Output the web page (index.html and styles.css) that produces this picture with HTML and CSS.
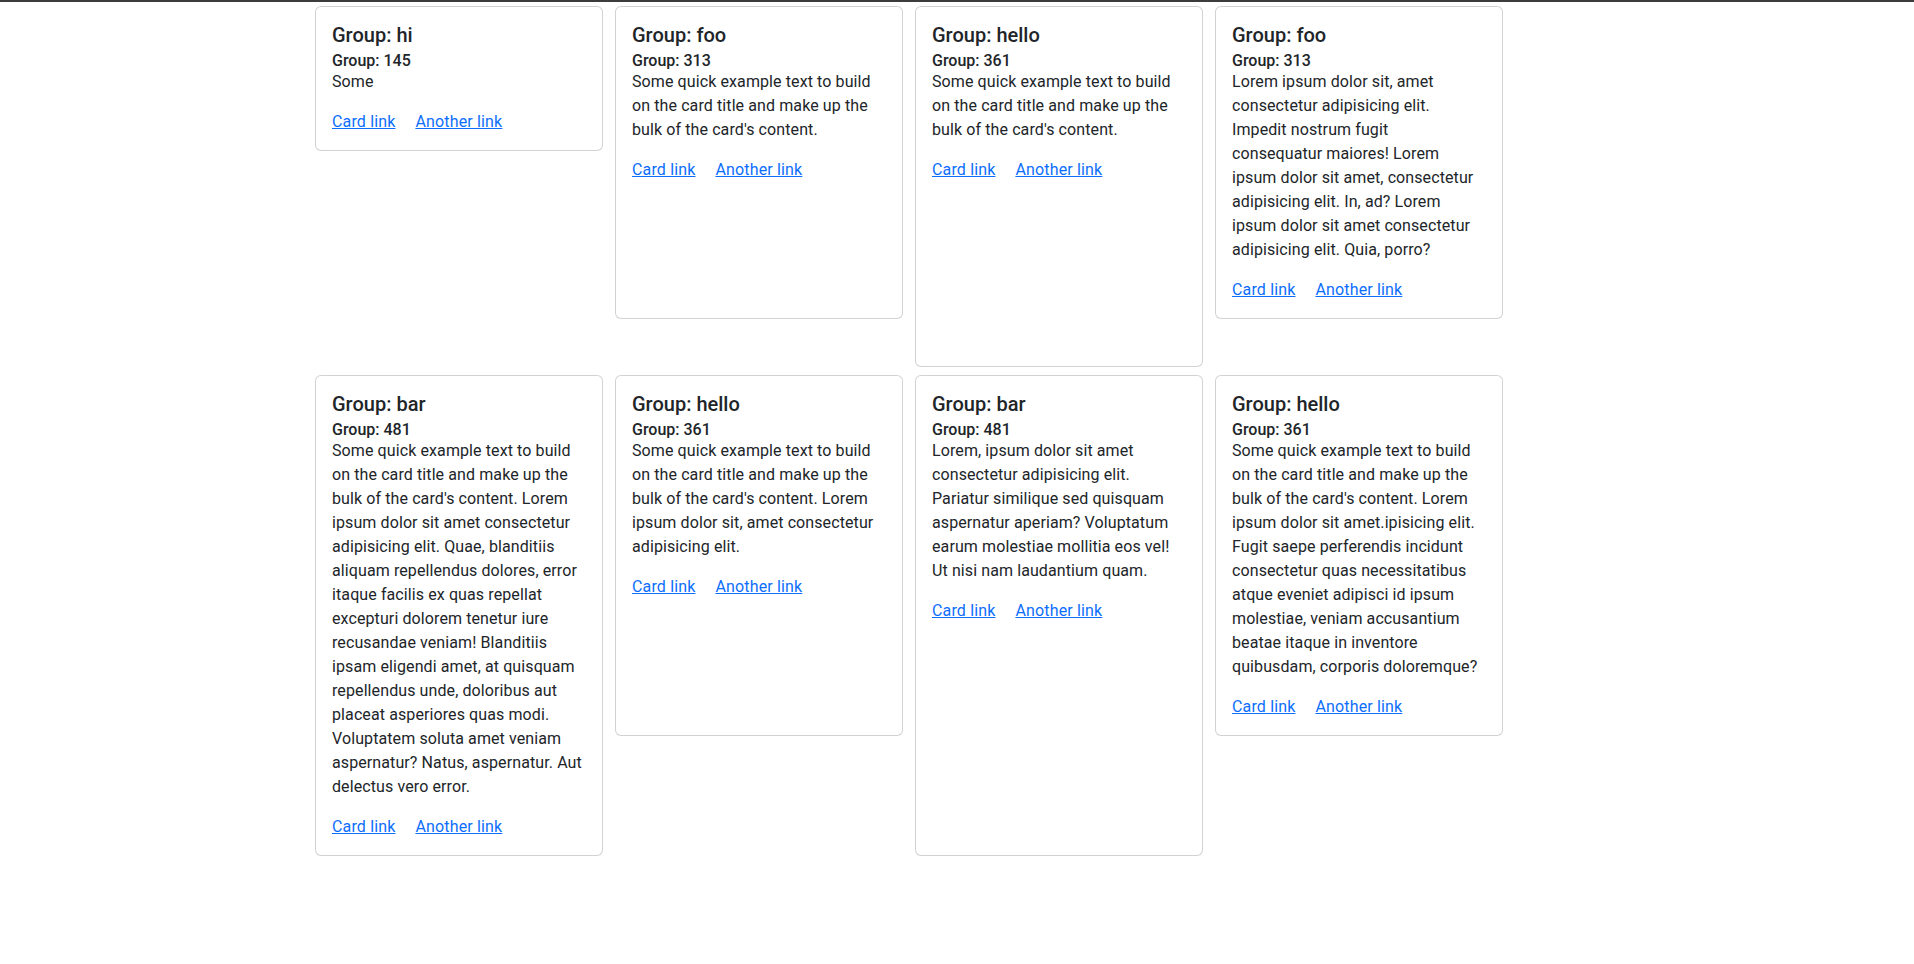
FILE: index.html
```html
<!DOCTYPE html>
<html lang="en">
<head>
<meta charset="utf-8">
<title>Cards</title>
<link rel="stylesheet" href="styles.css">
</head>
<body>
<div class="topbar"></div>
<main class="container">
  <div class="card-grid">
    <div class="card" style="height:145px">
      <div class="card-body">
        <h5 class="card-title">Group: hi</h5>
        <h6 class="card-subtitle">Group: 145</h6>
        <p class="card-text">Some</p>
        <a href="#" class="card-link">Card link</a>
        <a href="#" class="card-link">Another link</a>
      </div>
    </div>
    <div class="card" style="height:313px">
      <div class="card-body">
        <h5 class="card-title">Group: foo</h5>
        <h6 class="card-subtitle">Group: 313</h6>
        <p class="card-text">Some quick example text to build<br>on the card title and make up the<br>bulk of the card's content.</p>
        <a href="#" class="card-link">Card link</a>
        <a href="#" class="card-link">Another link</a>
      </div>
    </div>
    <div class="card" style="height:361px">
      <div class="card-body">
        <h5 class="card-title">Group: hello</h5>
        <h6 class="card-subtitle">Group: 361</h6>
        <p class="card-text">Some quick example text to build<br>on the card title and make up the<br>bulk of the card's content.</p>
        <a href="#" class="card-link">Card link</a>
        <a href="#" class="card-link">Another link</a>
      </div>
    </div>
    <div class="card" style="height:313px">
      <div class="card-body">
        <h5 class="card-title">Group: foo</h5>
        <h6 class="card-subtitle">Group: 313</h6>
        <p class="card-text">Lorem ipsum dolor sit, amet<br>consectetur adipisicing elit.<br>Impedit nostrum fugit<br>consequatur maiores! Lorem<br>ipsum dolor sit amet, consectetur<br>adipisicing elit. In, ad? Lorem<br>ipsum dolor sit amet consectetur<br>adipisicing elit. Quia, porro?</p>
        <a href="#" class="card-link">Card link</a>
        <a href="#" class="card-link">Another link</a>
      </div>
    </div>
    <div class="card" style="height:481px">
      <div class="card-body">
        <h5 class="card-title">Group: bar</h5>
        <h6 class="card-subtitle">Group: 481</h6>
        <p class="card-text">Some quick example text to build<br>on the card title and make up the<br>bulk of the card's content. Lorem<br>ipsum dolor sit amet consectetur<br>adipisicing elit. Quae, blanditiis<br>aliquam repellendus dolores, error<br>itaque facilis ex quas repellat<br>excepturi dolorem tenetur iure<br>recusandae veniam! Blanditiis<br>ipsam eligendi amet, at quisquam<br>repellendus unde, doloribus aut<br>placeat asperiores quas modi.<br>Voluptatem soluta amet veniam<br>aspernatur? Natus, aspernatur. Aut<br>delectus vero error.</p>
        <a href="#" class="card-link">Card link</a>
        <a href="#" class="card-link">Another link</a>
      </div>
    </div>
    <div class="card" style="height:361px">
      <div class="card-body">
        <h5 class="card-title">Group: hello</h5>
        <h6 class="card-subtitle">Group: 361</h6>
        <p class="card-text">Some quick example text to build<br>on the card title and make up the<br>bulk of the card's content. Lorem<br>ipsum dolor sit, amet consectetur<br>adipisicing elit.</p>
        <a href="#" class="card-link">Card link</a>
        <a href="#" class="card-link">Another link</a>
      </div>
    </div>
    <div class="card" style="height:481px">
      <div class="card-body">
        <h5 class="card-title">Group: bar</h5>
        <h6 class="card-subtitle">Group: 481</h6>
        <p class="card-text">Lorem, ipsum dolor sit amet<br>consectetur adipisicing elit.<br>Pariatur similique sed quisquam<br>aspernatur aperiam? Voluptatum<br>earum molestiae mollitia eos vel!<br>Ut nisi nam laudantium quam.</p>
        <a href="#" class="card-link">Card link</a>
        <a href="#" class="card-link">Another link</a>
      </div>
    </div>
    <div class="card" style="height:361px">
      <div class="card-body">
        <h5 class="card-title">Group: hello</h5>
        <h6 class="card-subtitle">Group: 361</h6>
        <p class="card-text">Some quick example text to build<br>on the card title and make up the<br>bulk of the card's content. Lorem<br>ipsum dolor sit amet.ipisicing elit.<br>Fugit saepe perferendis incidunt<br>consectetur quas necessitatibus<br>atque eveniet adipisci id ipsum<br>molestiae, veniam accusantium<br>beatae itaque in inventore<br>quibusdam, corporis doloremque?</p>
        <a href="#" class="card-link">Card link</a>
        <a href="#" class="card-link">Another link</a>
      </div>
    </div>
  </div>
</main>
</body>
</html>
```

FILE: styles.css
```css
* {
  box-sizing: border-box;
}

html, body {
  margin: 0;
  padding: 0;
  background: #ffffff;
}

body {
  font-family: Roboto, "Liberation Sans", sans-serif;
  font-size: 16px;
  line-height: 1.5;
  color: #212529;
}

.topbar {
  height: 2px;
  background: #3c3c3c;
}

.container {
  max-width: 1320px;
  margin: 0 auto;
  padding: 0 12px;
}

.card-grid {
  display: flex;
  flex-wrap: wrap;
  align-items: flex-start;
}

.card {
  width: 288px;
  margin: 4px 6px;
  border: 1px solid rgba(0, 0, 0, 0.175);
  border-radius: 6px;
  background: #ffffff;
  display: flex;
  flex-direction: column;
}

.card-body {
  padding: 16px;
}

.card-title {
  margin: 0 0 8px;
  font-size: 20px;
  font-weight: 500;
  line-height: 1.2;
}

.card-subtitle {
  margin: -4px 0 0;
  font-size: 16px;
  font-weight: 500;
  line-height: 1.2;
}

.card-text {
  margin: 0 0 16px;
  white-space: nowrap;
  letter-spacing: 0.1px;
}

.card-link {
  color: #0d6efd;
  text-decoration: underline;
  letter-spacing: 0.15px;
}

.card-link + .card-link {
  margin-left: 16px;
}
```
